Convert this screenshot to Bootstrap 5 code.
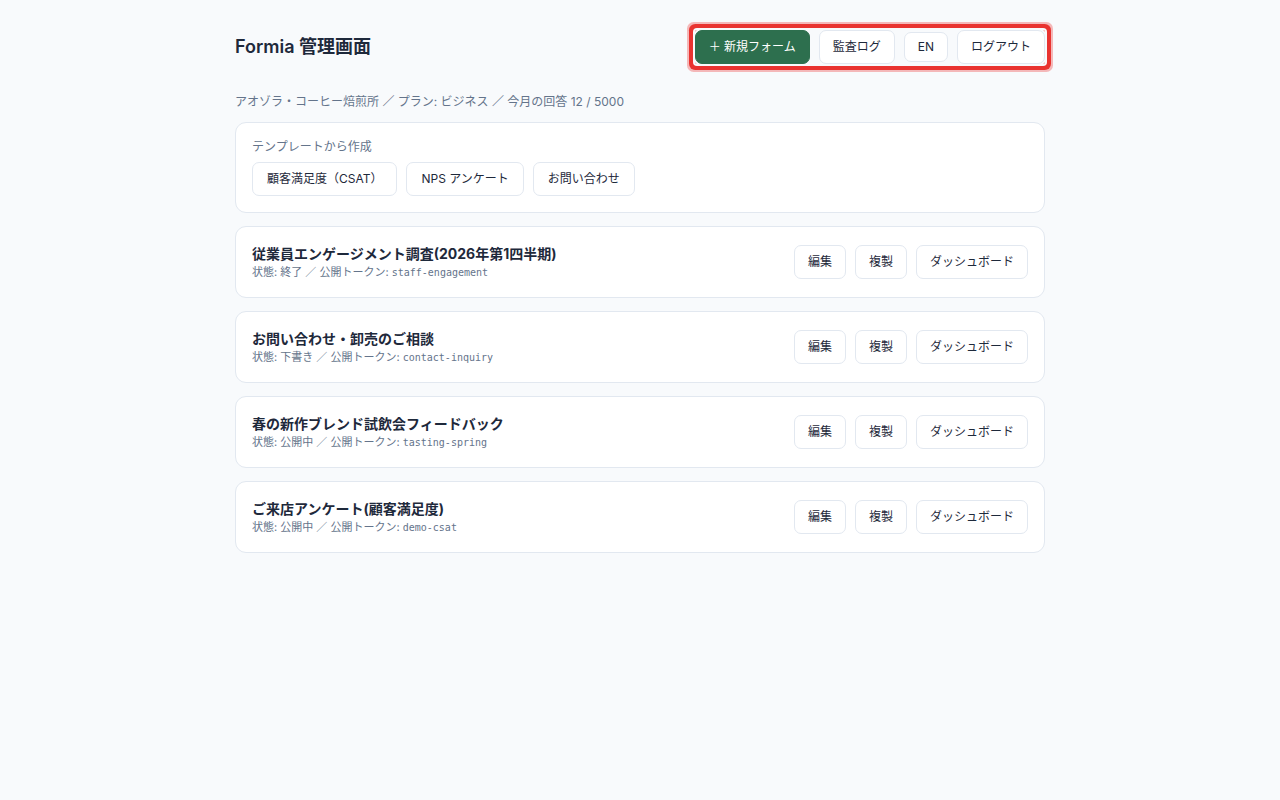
<!DOCTYPE html>
<html lang="ja">
<head>
<meta charset="utf-8">
<meta name="viewport" content="width=device-width, initial-scale=1">
<title>Formia 管理画面</title>
<link href="https://cdn.jsdelivr.net/npm/bootstrap@5.3.0/dist/css/bootstrap.min.css" rel="stylesheet">
<style>
  body { background: #f8fafc; color: #1e293b; font-family: Inter, "Noto Sans CJK JP", sans-serif; font-size: 12px; line-height: 17px; }
  .page { max-width: 842px; padding: 30px 16px; }
  .page-title { font-size: 18px; line-height: 24px; }
  .muted { color: #64748b; }
  .stack { gap: 13px; }
  .actions { gap: 9px; }
  .panel { border: 1px solid #e2e8f0; border-radius: 11px; padding: 16px; background: #fff; }
  .btn-app { --bs-btn-font-size: 12px; --bs-btn-line-height: 18px; --bs-btn-padding-x: 13px; --bs-btn-padding-y: 7px; --bs-btn-border-radius: 7px;
    --bs-btn-color: #1e293b; --bs-btn-bg: #fff; --bs-btn-border-color: #e2e8f0;
    --bs-btn-hover-color: #1e293b; --bs-btn-hover-bg: #f1f5f9; --bs-btn-hover-border-color: #cbd5e1; }
  .btn-new { --bs-btn-color: #fff; --bs-btn-bg: #2d6f4e; --bs-btn-border-color: #2d6f4e;
    --bs-btn-hover-color: #fff; --bs-btn-hover-bg: #24573f; --bs-btn-hover-border-color: #24573f; }
  .btn-lang { --bs-btn-padding-y: 5px; }
  .btn-tpl { --bs-btn-padding-x: 14px; }
  .highlight { border-radius: 2px; box-shadow: 0 0 0 2px #f8fafc, 0 0 0 6px #e93330, 0 0 0 8px #f4b8b9; }
  .page-head { margin-bottom: 29px; }
  .plan { margin-bottom: 12px; }
  .tpl-label { line-height: 15px; }
  .form-title { font-size: 14px; line-height: 21px; }
  .form-meta { font-size: 11px; line-height: 17px; }
  .form-meta code { font-family: "DejaVu Sans Mono", monospace; font-size: 10px; line-height: 1; color: inherit; }
</style>
</head>
<body>
<div class="container-fluid page">
  <header class="page-head d-flex flex-wrap justify-content-between align-items-center gap-3">
    <h1 class="page-title fw-semibold mb-0">Formia 管理画面</h1>
    <nav class="actions highlight d-flex flex-wrap align-items-center" aria-label="管理メニュー">
      <button type="button" class="btn btn-app btn-new">＋ 新規フォーム</button>
      <button type="button" class="btn btn-app">監査ログ</button>
      <button type="button" class="btn btn-app btn-lang">EN</button>
      <button type="button" class="btn btn-app">ログアウト</button>
    </nav>
  </header>
  <main>
    <p class="plan muted">アオゾラ・コーヒー焙煎所 ／ プラン: ビジネス ／ 今月の回答 12 / 5000</p>
    <div class="stack d-flex flex-column">
      <section class="panel">
        <p class="tpl-label muted mb-2">テンプレートから作成</p>
        <div class="actions d-flex flex-wrap">
          <button type="button" class="btn btn-app btn-tpl">顧客満足度（CSAT）</button>
          <button type="button" class="btn btn-app btn-tpl">NPS アンケート</button>
          <button type="button" class="btn btn-app btn-tpl">お問い合わせ</button>
        </div>
      </section>
      <article class="panel d-flex flex-wrap justify-content-between align-items-center">
        <div>
          <h2 class="form-title fw-bold mb-0">従業員エンゲージメント調査(2026年第1四半期)</h2>
          <p class="form-meta muted mb-0">状態: 終了 ／ 公開トークン: <code>staff-engagement</code></p>
        </div>
        <div class="actions d-flex">
          <button type="button" class="btn btn-app">編集</button>
          <button type="button" class="btn btn-app">複製</button>
          <button type="button" class="btn btn-app">ダッシュボード</button>
        </div>
      </article>
      <article class="panel d-flex flex-wrap justify-content-between align-items-center">
        <div>
          <h2 class="form-title fw-bold mb-0">お問い合わせ・卸売のご相談</h2>
          <p class="form-meta muted mb-0">状態: 下書き ／ 公開トークン: <code>contact-inquiry</code></p>
        </div>
        <div class="actions d-flex">
          <button type="button" class="btn btn-app">編集</button>
          <button type="button" class="btn btn-app">複製</button>
          <button type="button" class="btn btn-app">ダッシュボード</button>
        </div>
      </article>
      <article class="panel d-flex flex-wrap justify-content-between align-items-center">
        <div>
          <h2 class="form-title fw-bold mb-0">春の新作ブレンド試飲会フィードバック</h2>
          <p class="form-meta muted mb-0">状態: 公開中 ／ 公開トークン: <code>tasting-spring</code></p>
        </div>
        <div class="actions d-flex">
          <button type="button" class="btn btn-app">編集</button>
          <button type="button" class="btn btn-app">複製</button>
          <button type="button" class="btn btn-app">ダッシュボード</button>
        </div>
      </article>
      <article class="panel d-flex flex-wrap justify-content-between align-items-center">
        <div>
          <h2 class="form-title fw-bold mb-0">ご来店アンケート(顧客満足度)</h2>
          <p class="form-meta muted mb-0">状態: 公開中 ／ 公開トークン: <code>demo-csat</code></p>
        </div>
        <div class="actions d-flex">
          <button type="button" class="btn btn-app">編集</button>
          <button type="button" class="btn btn-app">複製</button>
          <button type="button" class="btn btn-app">ダッシュボード</button>
        </div>
      </article>
    </div>
  </main>
</div>
<script src="https://cdn.jsdelivr.net/npm/bootstrap@5.3.0/dist/js/bootstrap.bundle.min.js"></script>
</body>
</html>
